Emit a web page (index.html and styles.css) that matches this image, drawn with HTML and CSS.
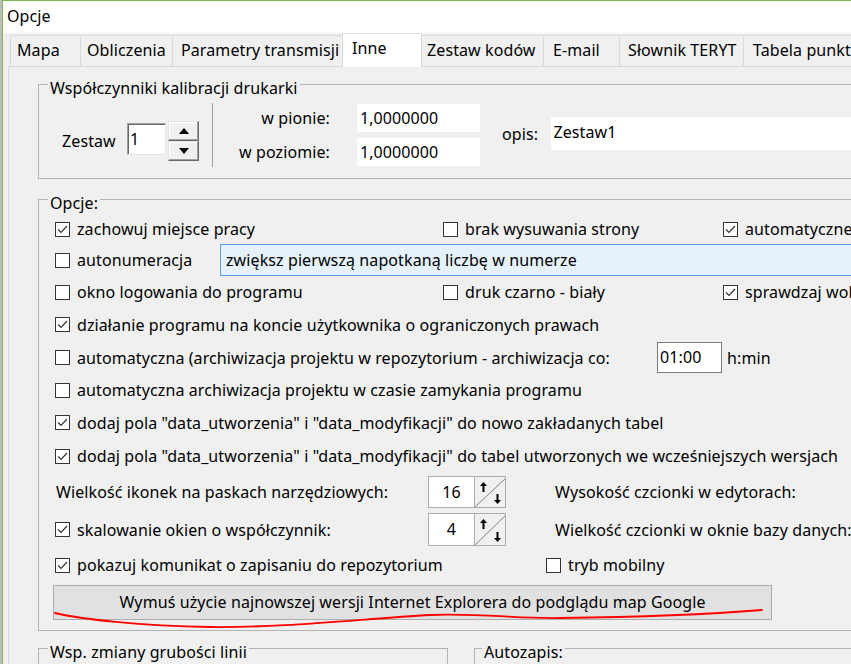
FILE: index.html
```html
<!DOCTYPE html>
<html lang="pl">
<head>
<meta charset="utf-8">
<title>Opcje</title>
<link rel="stylesheet" href="styles.css">
</head>
<body>
<div class="screen">
  <div class="desk"></div>
  <div class="window">
    <div class="titlebar">Opcje</div>
    <div class="tabstrip">
      <div class="tab tab-mapa">Mapa</div>
      <div class="tab tab-obl">Obliczenia</div>
      <div class="tab tab-par">Parametry transmisji</div>
      <div class="tab tab-inne active">Inne</div>
      <div class="tab tab-zest">Zestaw kodów</div>
      <div class="tab tab-mail">E-mail</div>
      <div class="tab tab-slow">Słownik TERYT</div>
      <div class="tab tab-tab">Tabela punktów</div>
    </div>
    <div class="panel">
      <fieldset class="group group-calib">
        <legend>Współczynniki kalibracji drukarki</legend>
        <div class="calib">
          <div class="zestaw">
            <span class="zestaw-label">Zestaw</span>
            <div class="sunken zestaw-input">1</div>
            <div class="updown">
              <div class="ud-btn"><svg width="10" height="6" viewBox="0 0 10 6"><path d="M0 6 L5 0 L10 6 Z" fill="#000"/></svg></div>
              <div class="ud-btn"><svg width="10" height="6" viewBox="0 0 10 6"><path d="M0 0 L5 6 L10 0 Z" fill="#000"/></svg></div>
            </div>
          </div>
          <div class="vsep"></div>
          <div class="scales">
            <span class="scale-label">w pionie:</span><span class="field scale-input">1,0000000</span>
            <span class="scale-label">w poziomie:</span><span class="field scale-input">1,0000000</span>
          </div>
          <span class="opis-label">opis:</span>
          <span class="field opis-input">Zestaw1</span>
        </div>
      </fieldset>

      <fieldset class="group group-opts">
        <legend>Opcje:</legend>
        <div class="opts">
          <div class="row h30 cols3">
            <label class="chk"><svg class="cb" width="15" height="15" viewBox="0 0 15 15"><rect x="0.5" y="0.5" width="14" height="14" fill="#fff" stroke="#333"/><path d="M3 7.5 L6 10.5 L12 4" fill="none" stroke="#333" stroke-width="1.2"/></svg>zachowuj miejsce pracy</label>
            <label class="chk"><svg class="cb" width="15" height="15" viewBox="0 0 15 15"><rect x="0.5" y="0.5" width="14" height="14" fill="#fff" stroke="#333"/></svg>brak wysuwania strony</label>
            <label class="chk"><svg class="cb" width="15" height="15" viewBox="0 0 15 15"><rect x="0.5" y="0.5" width="14" height="14" fill="#fff" stroke="#333"/><path d="M3 7.5 L6 10.5 L12 4" fill="none" stroke="#333" stroke-width="1.2"/></svg>automatyczne</label>
          </div>
          <div class="row h32 row-auto">
            <label class="chk"><svg class="cb" width="15" height="15" viewBox="0 0 15 15"><rect x="0.5" y="0.5" width="14" height="14" fill="#fff" stroke="#333"/></svg>autonumeracja</label>
            <div class="autofield">zwiększ pierwszą napotkaną liczbę w numerze</div>
          </div>
          <div class="row h32 cols3">
            <label class="chk"><svg class="cb" width="15" height="15" viewBox="0 0 15 15"><rect x="0.5" y="0.5" width="14" height="14" fill="#fff" stroke="#333"/></svg>okno logowania do programu</label>
            <label class="chk"><svg class="cb" width="15" height="15" viewBox="0 0 15 15"><rect x="0.5" y="0.5" width="14" height="14" fill="#fff" stroke="#333"/></svg>druk czarno - biały</label>
            <label class="chk"><svg class="cb" width="15" height="15" viewBox="0 0 15 15"><rect x="0.5" y="0.5" width="14" height="14" fill="#fff" stroke="#333"/><path d="M3 7.5 L6 10.5 L12 4" fill="none" stroke="#333" stroke-width="1.2"/></svg>sprawdzaj wol</label>
          </div>
          <div class="row h33">
            <label class="chk"><svg class="cb" width="15" height="15" viewBox="0 0 15 15"><rect x="0.5" y="0.5" width="14" height="14" fill="#fff" stroke="#333"/><path d="M3 7.5 L6 10.5 L12 4" fill="none" stroke="#333" stroke-width="1.2"/></svg>działanie programu na koncie użytkownika o ograniczonych prawach</label>
          </div>
          <div class="row h33 row-time">
            <label class="chk"><svg class="cb" width="15" height="15" viewBox="0 0 15 15"><rect x="0.5" y="0.5" width="14" height="14" fill="#fff" stroke="#333"/></svg>automatyczna (archiwizacja projektu w repozytorium - archiwizacja co:</label>
            <div class="timefield">01:00</div>
            <span>h:min</span>
          </div>
          <div class="row h32">
            <label class="chk"><svg class="cb" width="15" height="15" viewBox="0 0 15 15"><rect x="0.5" y="0.5" width="14" height="14" fill="#fff" stroke="#333"/></svg>automatyczna archiwizacja projektu w czasie zamykania programu</label>
          </div>
          <div class="row h33">
            <label class="chk"><svg class="cb" width="15" height="15" viewBox="0 0 15 15"><rect x="0.5" y="0.5" width="14" height="14" fill="#fff" stroke="#333"/><path d="M3 7.5 L6 10.5 L12 4" fill="none" stroke="#333" stroke-width="1.2"/></svg>dodaj pola "data_utworzenia" i "data_modyfikacji" do nowo zakładanych tabel</label>
          </div>
          <div class="row h34">
            <label class="chk"><svg class="cb" width="15" height="15" viewBox="0 0 15 15"><rect x="0.5" y="0.5" width="14" height="14" fill="#fff" stroke="#333"/><path d="M3 7.5 L6 10.5 L12 4" fill="none" stroke="#333" stroke-width="1.2"/></svg>dodaj pola "data_utworzenia" i "data_modyfikacji" do tabel utworzonych we wcześniejszych wersjach</label>
          </div>
          <div class="row h38 row-spin">
            <span class="plain">Wielkość ikonek na paskach narzędziowych:</span>
            <div class="spin">
              <div class="spin-num">16</div>
              <div class="spin-btn"><svg width="32" height="30" viewBox="0 0 32 30"><line x1="0" y1="30" x2="32" y2="0" stroke="#808080" stroke-width="1"/><path d="M8.5 5 L5 9 H7.5 V15 H9.5 V9 H12 Z" fill="#000"/><path d="M22.5 27 L19 23 H21.5 V17 H23.5 V23 H26 Z" fill="#000"/></svg></div>
            </div>
            <span>Wysokość czcionki w edytorach:</span>
          </div>
          <div class="row h37 row-spin">
            <label class="chk"><svg class="cb" width="15" height="15" viewBox="0 0 15 15"><rect x="0.5" y="0.5" width="14" height="14" fill="#fff" stroke="#333"/><path d="M3 7.5 L6 10.5 L12 4" fill="none" stroke="#333" stroke-width="1.2"/></svg>skalowanie okien o współczynnik:</label>
            <div class="spin spin-tall">
              <div class="spin-num">4</div>
              <div class="spin-btn"><svg width="32" height="31" viewBox="0 0 32 31"><line x1="0" y1="31" x2="32" y2="0" stroke="#808080" stroke-width="1"/><path d="M8.5 5 L5 9 H7.5 V15 H9.5 V9 H12 Z" fill="#000"/><path d="M22.5 28 L19 24 H21.5 V18 H23.5 V24 H26 Z" fill="#000"/></svg></div>
            </div>
            <span>Wielkość czcionki w oknie bazy danych:</span>
          </div>
          <div class="row h34 row-mob">
            <label class="chk"><svg class="cb" width="15" height="15" viewBox="0 0 15 15"><rect x="0.5" y="0.5" width="14" height="14" fill="#fff" stroke="#333"/><path d="M3 7.5 L6 10.5 L12 4" fill="none" stroke="#333" stroke-width="1.2"/></svg>pokazuj komunikat o zapisaniu do repozytorium</label>
            <label class="chk"><svg class="cb" width="15" height="15" viewBox="0 0 15 15"><rect x="0.5" y="0.5" width="14" height="14" fill="#fff" stroke="#333"/></svg>tryb mobilny</label>
          </div>
          <div class="bigbtn">Wymuś użycie najnowszej wersji Internet Explorera do podglądu map Google</div>
        </div>
      </fieldset>

      <div class="bottom">
        <fieldset class="group group-line">
          <legend>Wsp. zmiany grubości linii</legend>
          <div class="group-body"></div>
        </fieldset>
        <fieldset class="group group-auto">
          <legend>Autozapis:</legend>
          <div class="group-body"></div>
        </fieldset>
      </div>
    </div>
  </div>
  <svg class="scribble" width="851" height="664" viewBox="0 0 851 664"><path d="M55,613 C80,619 140,626 210,627 C280,628 360,619 430,615 C480,613 520,619 560,618 C640,617 700,615 762,610" fill="none" stroke="#ff0000" stroke-width="1.8" stroke-linecap="round"/></svg>
</div>
</body>
</html>
```

FILE: styles.css
```css
* { box-sizing: border-box; }
html, body { margin: 0; padding: 0; }
body {
  background: #fff;
  font-family: "Noto Sans", "Segoe UI", sans-serif;
  font-size: 16px;
  letter-spacing: 0.1px;
  color: #000;
}
.screen {
  position: relative;
  width: 851px;
  height: 664px;
  overflow: hidden;
  display: flex;
  background: #fff;
}
.desk { flex: none; width: 2px; background: #bdbdbd; }
.window {
  flex: none;
  width: 1250px;
  display: flex;
  flex-direction: column;
  border-left: 1px solid #7db84f;
  border-top: 1px solid #7db84f;
  background: #f0f0f0;
}
.titlebar {
  flex: none;
  height: 32px;
  line-height: 30px;
  padding-left: 4px;
  background: #fff;
  white-space: nowrap;
}
.tabstrip {
  flex: none;
  height: 33px;
  display: flex;
  align-items: flex-end;
  padding-left: 7px;
  background: #f0f0f0;
}
.tab {
  flex: none;
  height: 31px;
  margin-left: -1px;
  border: 1px solid #d9d9d9;
  border-bottom: none;
  background: #f0f0f0;
  line-height: 28px;
  white-space: nowrap;
  overflow: hidden;
}
.tab:first-child { margin-left: 0; }
.tab.active {
  height: 34px;
  margin-bottom: -1px;
  background: #fff;
  position: relative;
  z-index: 1;
}
.tab-mapa { width: 71px; padding-left: 6px; }
.tab-obl { width: 93px; padding-left: 6px; }
.tab-par { width: 171px; padding-left: 8px; }
.tab-inne { width: 80px; padding-left: 9px; }
.tab-zest { width: 123px; padding-left: 5px; }
.tab-mail { width: 77px; padding-left: 9px; }
.tab-slow { width: 125px; padding-left: 8px; }
.tab-tab { width: 140px; padding-left: 9px; }

.panel {
  flex: 1;
  margin-left: 5px;
  border-top: 1px solid #d9d9d9;
  border-left: 1px solid #d9d9d9;
  background: #f0f0f0;
  padding: 5px 0 0 29px;
  display: flex;
  flex-direction: column;
  align-items: flex-start;
}
.group {
  margin: 0;
  padding: 0;
  border: 1px solid #b4b4b4;
  min-width: 0;
  flex: none;
}
.group legend {
  margin-left: 9px;
  padding: 8px 2px 0;
  line-height: 16px;
  white-space: nowrap;
}
.group-calib { width: 1000px; }
.calib {
  display: flex;
  align-items: flex-start;
  padding: 7px 0 11px 23px;
  white-space: nowrap;
}
.zestaw {
  display: flex;
  align-items: center;
  margin-top: 18px;
  height: 40px;
}
.zestaw-label { width: 65px; }
.sunken {
  background: #fff;
  border: 1px solid;
  border-color: #a0a0a0 #e3e3e3 #e3e3e3 #a0a0a0;
  box-shadow: inset 1px 1px 0 #696969;
}
.zestaw-input {
  width: 39px;
  height: 32px;
  margin-bottom: 4px;
  padding-left: 2px;
  line-height: 30px;
}
.updown {
  margin-left: 2px;
  width: 31px;
  display: flex;
  flex-direction: column;
}
.ud-btn {
  height: 20px;
  background: #f0f0f0;
  border: 1px solid;
  border-color: #e3e3e3 #696969 #696969 #e3e3e3;
  box-shadow: inset -1px -1px 0 #a0a0a0, inset 1px 1px 0 #fff;
  display: flex;
  align-items: center;
  justify-content: center;
}
.ud-btn svg { display: block; }
.vsep {
  margin-left: 13px;
  width: 1px;
  height: 64px;
  background: #a0a0a0;
}
.scales {
  margin-top: 1px;
  display: grid;
  grid-template-columns: 117px 123px;
  grid-auto-rows: 28px;
  column-gap: 27px;
  row-gap: 6px;
}
.scale-label { text-align: right; line-height: 28px; }
.field { background: #fff; display: block; }
.scale-input { padding-left: 3px; line-height: 28px; }
.opis-label {
  margin-left: 22px;
  width: 51px;
  margin-top: 21px;
  line-height: 20px;
}
.opis-input {
  width: 500px;
  height: 33px;
  margin-top: 14px;
  line-height: 31px;
  padding-left: 2px;
}

.group-opts { width: 1000px; margin-top: 8px; }
.opts { padding: 3px 0 10px 16px; }
.row {
  display: grid;
  align-items: center;
  white-space: nowrap;
}
.h30 { height: 30px; }
.h32 { height: 32px; }
.h33 { height: 33px; }
.h34 { height: 34px; }
.h37 { height: 37px; }
.h38 { height: 38px; }
.cols3 { grid-template-columns: 388px 280px auto; }
.row-auto { grid-template-columns: 165px auto; }
.row-time { grid-template-columns: 602px 70px auto; }
.row-spin { grid-template-columns: 373px 127px auto; }
.row-mob { grid-template-columns: 491px auto; }
.chk {
  display: flex;
  align-items: center;
  gap: 7px;
}
.cb { display: block; flex: none; }
.plain { padding-left: 1px; }
.autofield {
  width: 700px;
  height: 32px;
  border: 1px solid #569de5;
  background: #e5f1fb;
  padding-left: 5px;
  line-height: 30px;
}
.timefield {
  width: 65px;
  height: 31px;
  background: #fff;
  border: 1px solid #7a7a7a;
  padding-left: 2px;
  line-height: 29px;
}
.spin {
  display: flex;
  width: 78px;
  height: 32px;
  border: 1px solid #adadad;
  background: #fff;
}
.spin-tall { height: 33px; }
.spin-num {
  width: 45px;
  text-align: center;
  line-height: 30px;
}
.spin-btn {
  flex: 1;
  border-left: 1px solid #adadad;
  background: #f0f0f0;
  overflow: hidden;
}
.spin-btn svg { display: block; }
.bigbtn {
  margin-top: 3px;
  margin-left: -2px;
  width: 719px;
  height: 35px;
  border: 1px solid #adadad;
  background: #e1e1e1;
  text-align: center;
  line-height: 33px;
  white-space: nowrap;
}
.bottom {
  display: flex;
  margin-top: 5px;
}
.group-line { width: 410px; }
.group-auto { width: 500px; margin-left: 26px; }
.group-auto legend { margin-left: 7px; }
.group-body { height: 60px; }
.scribble {
  position: absolute;
  left: 0;
  top: 0;
  pointer-events: none;
}
```
